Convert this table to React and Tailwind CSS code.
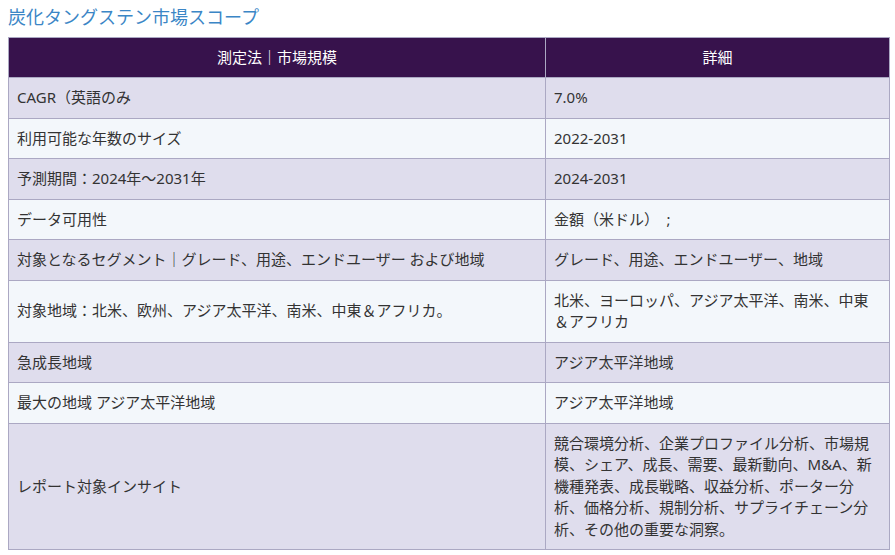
import React from 'react';

const rows = [
  ['CAGR（英語のみ', '7.0%'],
  ['利用可能な年数のサイズ', '2022-2031'],
  ['予測期間：2024年～2031年', '2024-2031'],
  ['データ可用性', '金額（米ドル）　;'],
  ['対象となるセグメント｜グレード、用途、エンドユーザー および地域', 'グレード、用途、エンドユーザー、地域'],
  ['対象地域：北米、欧州、アジア太平洋、南米、中東＆アフリカ。', '北米、ヨーロッパ、アジア太平洋、南米、中東＆アフリカ'],
  ['急成長地域', 'アジア太平洋地域'],
  ['最大の地域 アジア太平洋地域', 'アジア太平洋地域'],
  ['レポート対象インサイト', '競合環境分析、企業プロファイル分析、市場規模、シェア、成長、需要、最新動向、M&A、新機種発表、成長戦略、収益分析、ポーター分析、価格分析、規制分析、サプライチェーン分析、その他の重要な洞察。'],
];

const App = () => {
  return (
    <div className="bg-white min-h-[555px] px-2 pt-[5px] font-['Noto_Sans','Noto_Sans_CJK_JP',sans-serif] text-[#333]">
      {/* title */}
      <h2 className="text-[18px] leading-[24px] text-[#3b86c6] font-normal mb-[8px]">炭化タングステン市場スコープ</h2>

      <table className="w-[881px] border-collapse border border-[#aba8c3] text-[15px] leading-[21.5px] table-fixed">
        <colgroup>
          <col className="w-[537px]" />
          <col className="w-[344px]" />
        </colgroup>
        <thead>
          <tr className="bg-[#37124c] text-white">
            <th className="border border-[#aba8c3] font-normal text-center h-[40px] px-2">測定法｜市場規模</th>
            <th className="border border-[#aba8c3] font-normal text-center h-[40px] px-2">詳細</th>
          </tr>
        </thead>
        <tbody>
          {rows.map(([label, detail], i) => (
            <tr key={i} className={i % 2 === 0 ? 'bg-[#dfdded]' : 'bg-[#f3f7fb]'}>
              <td className="border border-[#aba8c3] px-2 py-[9px] align-middle">{label}</td>
              <td className="border border-[#aba8c3] px-2 py-[9px] align-middle">{detail}</td>
            </tr>
          ))}
        </tbody>
      </table>
    </div>
  );
};

export default App;
